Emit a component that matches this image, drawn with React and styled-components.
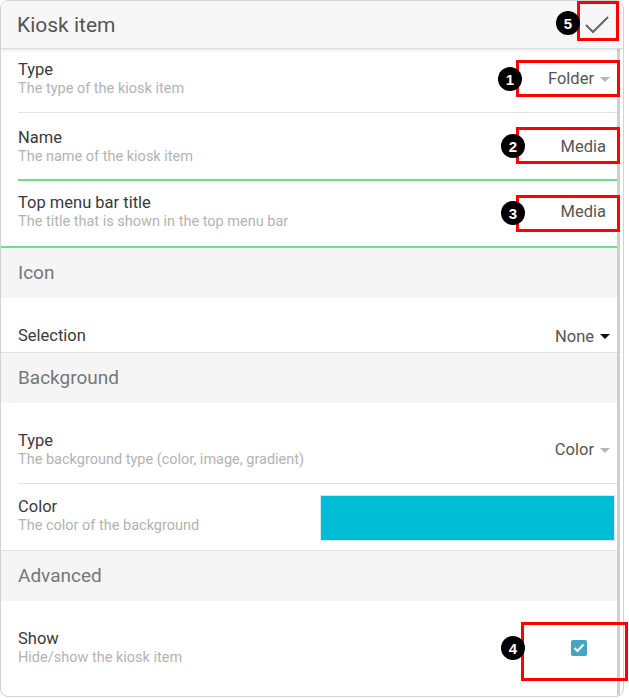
import React from 'react'
import styled, { createGlobalStyle } from 'styled-components'

const GlobalStyle = createGlobalStyle`
  body {
    margin: 0;
    background: #fff;
    font-family: Roboto, 'Noto Sans', sans-serif;
  }
`

const Page = styled.div`
  position: relative;
  width: 629px;
  height: 699px;
`

const Card = styled.div`
  width: 624px;
  height: 697px;
  box-sizing: border-box;
  border: 1px solid #cdd5d5;
  border-radius: 8px;
  overflow: hidden;
  display: flex;
  flex-direction: column;
  background: #fff;
`

const Header = styled.div`
  height: 47px;
  flex-shrink: 0;
  display: flex;
  align-items: center;
  justify-content: space-between;
  padding: 0 13px 0 16px;
  background: #f7f7f7;
  border-bottom: 1px solid #dcdcdc;
  box-shadow: 0 1px 3px rgba(0, 0, 0, 0.12);
  position: relative;
  z-index: 1;
`

const Title = styled.div`
  font-size: 21px;
  color: #555;
`

const Body = styled.div`
  flex: 1;
  margin-right: 3px;
  border-right: 3px solid #cfcfcf;
  display: flex;
  flex-direction: column;
`

const Row = styled.div`
  display: flex;
  align-items: ${({ $top }) => ($top ? 'flex-start' : 'center')};
  justify-content: space-between;
  padding: ${({ $pt }) => $pt}px 2px ${({ $pb }) => $pb}px ${({ $inset }) => ($inset ? 0 : 17)}px;
  margin-left: ${({ $inset }) => ($inset ? 17 : 0)}px;
  border-bottom: ${({ $line }) =>
    $line === 'green' ? '2px solid #6ddc8b' : $line === 'none' ? '0' : '1px solid #e3e3e3'};
`

const LabelGroup = styled.div`
  display: flex;
  flex-direction: column;
`

const Label = styled.div`
  font-size: 16.5px;
  line-height: 20px;
  color: #3a3a3a;
`

const Desc = styled.div`
  font-size: 14.5px;
  line-height: 17px;
  color: #b3b3b3;
`

const SectionHead = styled.div`
  height: 50px;
  box-sizing: border-box;
  flex-shrink: 0;
  display: flex;
  align-items: center;
  padding: 0 0 2px 17px;
  background: #f5f5f5;
  font-size: 19px;
  color: #777;
`

const Value = styled.div`
  display: flex;
  align-items: center;
  gap: 6px;
  margin-right: ${({ $select }) => ($select ? 5 : 9)}px;
  font-size: 16.5px;
  color: #555;
`

const Caret = styled.span`
  width: 0;
  height: 0;
  border-left: 5px solid transparent;
  border-right: 5px solid transparent;
  border-top: 5px solid ${({ $dark }) => ($dark ? '#111' : '#b5b5b5')};
  margin-top: 1px;
`

const Swatch = styled.div`
  width: 295px;
  height: 46px;
  margin-top: -2px;
  box-sizing: border-box;
  background: #00bcd4;
  border: 1px solid #cfe9ee;
`

const CheckBox = styled.div`
  width: 16px;
  height: 16px;
  border-radius: 2px;
  background: #45a4c4;
  display: flex;
  align-items: center;
  justify-content: center;
  margin: 1px 28px 0 0;
`

const Mark = styled.div`
  position: absolute;
  z-index: 2;
  left: ${({ $x }) => $x}px;
  top: ${({ $y }) => $y}px;
  width: ${({ $w }) => $w}px;
  height: ${({ $h }) => $h}px;
  box-sizing: border-box;
  border: 3px solid #f00;
  pointer-events: none;
`

const Badge = styled.div`
  position: absolute;
  z-index: 3;
  left: ${({ $cx }) => $cx - 12}px;
  top: ${({ $cy }) => $cy - 12}px;
  width: 24px;
  height: 24px;
  border-radius: 50%;
  background: #000;
  color: #fff;
  font-family: 'Liberation Sans', Arial, sans-serif;
  font-weight: bold;
  font-size: 15px;
  display: flex;
  align-items: center;
  justify-content: center;
`

const marks = [
  { n: 5, x: 577, y: 1, w: 42, h: 40, cx: 568, cy: 23 },
  { n: 1, x: 516, y: 60, w: 104, h: 37, cx: 510, cy: 79 },
  { n: 2, x: 516, y: 127, w: 104, h: 37, cx: 513, cy: 146 },
  { n: 3, x: 516, y: 195, w: 104, h: 37, cx: 513, cy: 213 },
  { n: 4, x: 521, y: 622, w: 107, h: 59, cx: 513, cy: 648 },
]

function Select({ value, dark }) {
  return (
    <Value $select>
      {value}
      <Caret $dark={dark} />
    </Value>
  )
}

export default function App() {
  return (
    <Page>
      <GlobalStyle />
      <Card>
        <Header>
          <Title>Kiosk item</Title>
          <svg width="26" height="20" viewBox="0 0 26 20">
            <polyline points="2,10 9,17 24,2" fill="none" stroke="#666" strokeWidth="2" />
          </svg>
        </Header>
        <Body>
          <Row $pt={11} $pb={15} $inset>
            <LabelGroup>
              <Label>Type</Label>
              <Desc>The type of the kiosk item</Desc>
            </LabelGroup>
            <Select value="Folder" />
          </Row>
          <Row $pt={15} $pb={14} $inset $line="green">
            <LabelGroup>
              <Label>Name</Label>
              <Desc>The name of the kiosk item</Desc>
            </LabelGroup>
            <Value>Media</Value>
          </Row>
          <Row $pt={12} $pb={16} $line="green">
            <LabelGroup>
              <Label>Top menu bar title</Label>
              <Desc>The title that is shown in the top menu bar</Desc>
            </LabelGroup>
            <Value>Media</Value>
          </Row>

          <SectionHead>Icon</SectionHead>
          <Row $pt={28} $pb={6}>
            <Label>Selection</Label>
            <Select value="None" dark />
          </Row>

          <SectionHead>Background</SectionHead>
          <Row $pt={28} $pb={15} $inset>
            <LabelGroup>
              <Label>Type</Label>
              <Desc>The background type (color, image, gradient)</Desc>
            </LabelGroup>
            <Select value="Color" />
          </Row>
          <Row $pt={13} $pb={9} $top>
            <LabelGroup>
              <Label>Color</Label>
              <Desc>The color of the background</Desc>
            </LabelGroup>
            <Swatch />
          </Row>

          <SectionHead>Advanced</SectionHead>
          <Row $pt={28} $pb={30} $line="none">
            <LabelGroup>
              <Label>Show</Label>
              <Desc>Hide/show the kiosk item</Desc>
            </LabelGroup>
            <CheckBox>
              <svg width="12" height="10" viewBox="0 0 12 10">
                <polyline points="1.5,5 4.5,8 10.5,1.5" fill="none" stroke="#fff" strokeWidth="2" />
              </svg>
            </CheckBox>
          </Row>
        </Body>
      </Card>
      {marks.map((m) => (
        <React.Fragment key={m.n}>
          <Mark $x={m.x} $y={m.y} $w={m.w} $h={m.h} />
          <Badge $cx={m.cx} $cy={m.cy}>{m.n}</Badge>
        </React.Fragment>
      ))}
    </Page>
  )
}
